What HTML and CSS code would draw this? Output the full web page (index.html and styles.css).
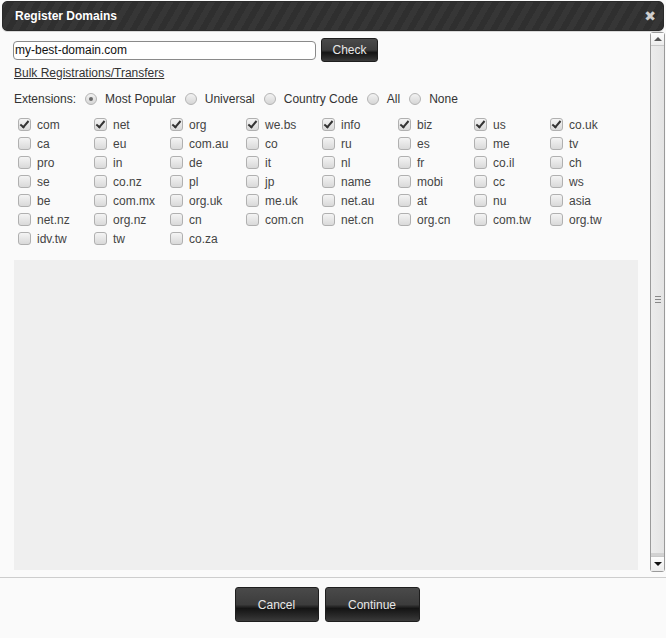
FILE: index.html
```html
<!DOCTYPE html>
<html>
<head>
<meta charset="utf-8">
<title>Register Domains</title>
<link rel="stylesheet" href="styles.css">
</head>
<body>
<div class="dialog">
  <div class="titlebar">
    <span class="title">Register Domains</span>
    <span class="close">&#10006;</span>
  </div>
  <div class="main">
    <div class="content">
      <div class="search-row">
        <input class="domain-input" type="text" value="my-best-domain.com">
        <button class="btn btn-check">Check</button>
      </div>
      <a class="bulk-link" href="#">Bulk Registrations/Transfers</a>
      <div class="ext-row">
        <span class="ext-label">Extensions:</span>
        <span class="radio selected"></span><span class="radio-label">Most Popular</span>
        <span class="radio"></span><span class="radio-label">Universal</span>
        <span class="radio"></span><span class="radio-label">Country Code</span>
        <span class="radio"></span><span class="radio-label">All</span>
        <span class="radio"></span><span class="radio-label">None</span>
      </div>
      <div class="tld-grid">
        <div class="cb"><span class="box checked"></span>com</div>
        <div class="cb"><span class="box checked"></span>net</div>
        <div class="cb"><span class="box checked"></span>org</div>
        <div class="cb"><span class="box checked"></span>we.bs</div>
        <div class="cb"><span class="box checked"></span>info</div>
        <div class="cb"><span class="box checked"></span>biz</div>
        <div class="cb"><span class="box checked"></span>us</div>
        <div class="cb"><span class="box checked"></span>co.uk</div>

        <div class="cb"><span class="box"></span>ca</div>
        <div class="cb"><span class="box"></span>eu</div>
        <div class="cb"><span class="box"></span>com.au</div>
        <div class="cb"><span class="box"></span>co</div>
        <div class="cb"><span class="box"></span>ru</div>
        <div class="cb"><span class="box"></span>es</div>
        <div class="cb"><span class="box"></span>me</div>
        <div class="cb"><span class="box"></span>tv</div>

        <div class="cb"><span class="box"></span>pro</div>
        <div class="cb"><span class="box"></span>in</div>
        <div class="cb"><span class="box"></span>de</div>
        <div class="cb"><span class="box"></span>it</div>
        <div class="cb"><span class="box"></span>nl</div>
        <div class="cb"><span class="box"></span>fr</div>
        <div class="cb"><span class="box"></span>co.il</div>
        <div class="cb"><span class="box"></span>ch</div>

        <div class="cb"><span class="box"></span>se</div>
        <div class="cb"><span class="box"></span>co.nz</div>
        <div class="cb"><span class="box"></span>pl</div>
        <div class="cb"><span class="box"></span>jp</div>
        <div class="cb"><span class="box"></span>name</div>
        <div class="cb"><span class="box"></span>mobi</div>
        <div class="cb"><span class="box"></span>cc</div>
        <div class="cb"><span class="box"></span>ws</div>

        <div class="cb"><span class="box"></span>be</div>
        <div class="cb"><span class="box"></span>com.mx</div>
        <div class="cb"><span class="box"></span>org.uk</div>
        <div class="cb"><span class="box"></span>me.uk</div>
        <div class="cb"><span class="box"></span>net.au</div>
        <div class="cb"><span class="box"></span>at</div>
        <div class="cb"><span class="box"></span>nu</div>
        <div class="cb"><span class="box"></span>asia</div>

        <div class="cb"><span class="box"></span>net.nz</div>
        <div class="cb"><span class="box"></span>org.nz</div>
        <div class="cb"><span class="box"></span>cn</div>
        <div class="cb"><span class="box"></span>com.cn</div>
        <div class="cb"><span class="box"></span>net.cn</div>
        <div class="cb"><span class="box"></span>org.cn</div>
        <div class="cb"><span class="box"></span>com.tw</div>
        <div class="cb"><span class="box"></span>org.tw</div>

        <div class="cb"><span class="box"></span>idv.tw</div>
        <div class="cb"><span class="box"></span>tw</div>
        <div class="cb"><span class="box"></span>co.za</div>
      </div>
      <div class="results"></div>
    </div>
    <div class="scrollbar">
      <div class="sb-btn sb-up"><span class="arrow-up"></span></div>
      <div class="sb-thumb"><span class="grip"></span></div>
      <div class="sb-btn sb-down"><span class="arrow-down"></span></div>
    </div>
  </div>
  <div class="footer">
    <button class="btn btn-big btn-cancel">Cancel</button>
    <button class="btn btn-big btn-continue">Continue</button>
  </div>
</div>
</body>
</html>
```

FILE: styles.css
```css
* { box-sizing: border-box; }

html, body {
  margin: 0;
  padding: 0;
  background: #fafafa;
}

body {
  font-family: "Liberation Sans", Arial, sans-serif;
  font-size: 12px;
  color: #333;
}

.dialog {
  width: 666px;
  height: 638px;
  display: flex;
  flex-direction: column;
  background: #fafafa;
}

.titlebar {
  margin: 1px 2px 0 2px;
  height: 30px;
  border-radius: 5px;
  border: 1px solid #2a2a2a;
  background: repeating-linear-gradient(
    -60deg,
    #2f2f2f 0px,
    #2f2f2f 6px,
    #363636 6px,
    #363636 12px
  );
  display: flex;
  align-items: center;
  justify-content: space-between;
  padding: 0 7px 0 12px;
  box-shadow: 0 1px 0 #d8d8d8;
}

.title {
  color: #fff;
  font-weight: bold;
  font-size: 12px;
}

.close {
  color: #d0d0d0;
  font-size: 14px;
  font-family: "DejaVu Sans", sans-serif;
  font-weight: bold;
}

.main {
  display: flex;
  height: 546px;
}

.content {
  flex: 1;
  padding: 7px 12px 0 14px;
  display: flex;
  flex-direction: column;
}

.search-row {
  display: flex;
  align-items: center;
  height: 24px;
}

.domain-input {
  width: 303px;
  height: 19px;
  margin-left: -1px;
  border: 1px solid #8a8a8a;
  border-radius: 4px;
  padding: 0 1px;
  font-family: "Liberation Sans", Arial, sans-serif;
  font-size: 12px;
  color: #111;
  background: #fff;
  outline: none;
}

.btn {
  font-family: "Liberation Sans", Arial, sans-serif;
  font-size: 12px;
  color: #e8e8e8;
  border: 1px solid #1e1e1e;
  border-radius: 3px;
  background: linear-gradient(#4a4a4a 0%, #3c3c3c 50%, #141414 62%, #2a2a2a 85%, #3a3a3a 100%);
  padding: 0;
  cursor: pointer;
}

.btn-check {
  width: 57px;
  height: 24px;
  margin-left: 5px;
}

.bulk-link {
  margin-top: 4px;
  line-height: 15px;
  color: #333;
  text-decoration: underline;
  align-self: flex-start;
}

.ext-row {
  display: flex;
  align-items: center;
  height: 15px;
  margin-top: 10px;
}

.ext-label {
  margin-right: 9px;
}

.radio {
  width: 12px;
  height: 12px;
  border-radius: 50%;
  border: 1px solid #b4b4b4;
  background: linear-gradient(#f2f2f2, #d6d6d6);
  margin-right: 8px;
  position: relative;
}

.radio.selected::after {
  content: "";
  position: absolute;
  left: 3px;
  top: 3px;
  width: 4px;
  height: 4px;
  border-radius: 50%;
  background: #6a6a6a;
}

.radio-label {
  margin-right: 9px;
}

.tld-grid {
  display: grid;
  grid-template-columns: repeat(8, 76px);
  grid-auto-rows: 19px;
  margin-top: 9px;
  padding-left: 4px;
}

.cb {
  display: flex;
  align-items: center;
  color: #444;
}

.box {
  width: 13px;
  height: 13px;
  border: 1px solid #b0b0b0;
  border-radius: 3px;
  background: linear-gradient(#f4f4f4, #d9d9d9);
  margin-right: 6px;
  position: relative;
  flex: none;
}

.box.checked::after {
  content: "";
  position: absolute;
  left: 3px;
  top: 0px;
  width: 3px;
  height: 7px;
  border-right: 2px solid #333;
  border-bottom: 2px solid #333;
  transform: rotate(40deg);
}

.results {
  margin-top: 12px;
  height: 310px;
  background: #efefef;
}

.scrollbar {
  width: 15px;
  margin: 1px 1px 5px 0;
  border: 1px solid #9a9a9a;
  border-radius: 3px;
  display: flex;
  flex-direction: column;
  background: #eee;
}

.sb-btn {
  height: 13px;
  background: linear-gradient(#fdfdfd, #ececec);
  display: flex;
  align-items: center;
  justify-content: center;
  flex: none;
}

.sb-up { border-bottom: 1px solid #c8c8c8; }
.sb-down { border-top: 1px solid #c8c8c8; height: 15px; }

.arrow-up {
  width: 0;
  height: 0;
  border-left: 4px solid transparent;
  border-right: 4px solid transparent;
  border-bottom: 4px solid #555;
}

.arrow-down {
  width: 0;
  height: 0;
  border-left: 4px solid transparent;
  border-right: 4px solid transparent;
  border-top: 4px solid #111;
}

.sb-thumb {
  flex: 1;
  background: linear-gradient(90deg, #ececec, #e4e4e4);
  display: flex;
  align-items: center;
  justify-content: center;
  border-bottom: 3px solid #d2d2d2;
}

.grip {
  width: 6px;
  height: 7px;
  background: repeating-linear-gradient(#888 0px, #888 1px, transparent 1px, transparent 3px);
}

.footer {
  flex: 1;
  border-top: 1px solid #cdcdcd;
  display: flex;
  justify-content: center;
  align-items: flex-start;
  gap: 6px;
  padding: 9px 12px 0 0;
}

.btn-big {
  height: 35px;
}

.btn-cancel { width: 84px; }
.btn-continue { width: 95px; }
```
